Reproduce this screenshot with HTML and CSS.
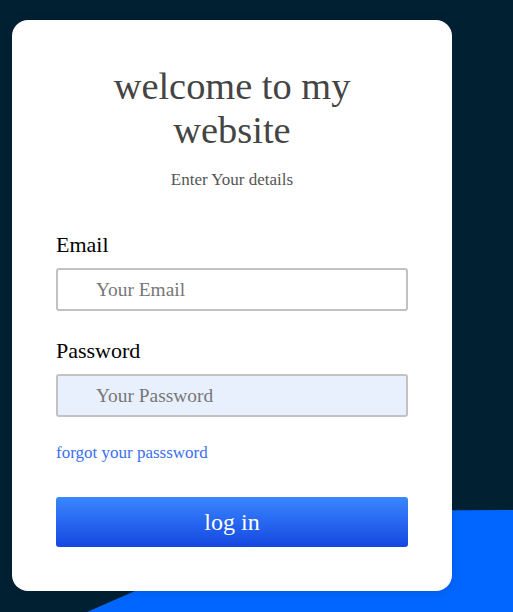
FILE: index.html
```html
<!DOCTYPE html>
<html>
<head>
<meta charset="utf-8">
<link rel="stylesheet" href="styles.css">
</head>
<body>
<div class="bg-shape"></div>
<main class="card">
  <h1 class="title">welcome to my website</h1>
  <p class="subtitle">Enter Your details</p>
  <form class="form">
    <label class="label" for="email">Email</label>
    <input class="input" id="email" type="text" placeholder="Your Email">
    <label class="label label-pw" for="pw">Password</label>
    <input class="input input-filled" id="pw" type="password" placeholder="Your Password">
    <a class="forgot" href="#">forgot your passsword</a>
    <button class="btn" type="button">log in</button>
  </form>
</main>
</body>
</html>
```

FILE: styles.css
```css
html, body {
  margin: 0;
  padding: 0;
}
body {
  width: 513px;
  height: 612px;
  background: #012133;
  position: relative;
  overflow: hidden;
  font-family: "Liberation Serif", "Times New Roman", serif;
}
.bg-shape {
  position: absolute;
  left: 0;
  top: 0;
  width: 513px;
  height: 612px;
  background: #0066ff;
  clip-path: polygon(87px 612px, 318px 511px, 513px 510px, 513px 612px);
}
.card {
  position: relative;
  margin: 20px 0 0 12px;
  width: 440px;
  height: 571px;
  box-sizing: border-box;
  padding: 44px;
  background: #ffffff;
  border-radius: 16px;
  box-shadow: 0 0 8px rgba(0, 0, 0, 0.15);
}
.title {
  margin: 0;
  font-weight: normal;
  font-size: 38.4px;
  color: #444444;
  text-align: center;
  line-height: 44px;
  padding: 0 40px;
}
.subtitle {
  margin: 18px 0 0;
  font-size: 17px;
  color: #555555;
  text-align: center;
}
.form {
  display: flex;
  flex-direction: column;
  margin-top: 42px;
}
.label {
  font-size: 22px;
  color: #000;
  margin-bottom: 10px;
}
.label-pw {
  margin-top: 27px;
}
.input {
  height: 43px;
  box-sizing: border-box;
  border: 2px solid #c2c2c2;
  border-radius: 3px;
  padding: 0 0 0 38px;
  font-family: "Liberation Serif", "Times New Roman", serif;
  font-size: 19.4px;
  color: #333;
  background: #ffffff;
  outline: none;
}
.input::placeholder {
  color: #777777;
}
.input-filled {
  background: #e8f0fe;
}
.forgot {
  margin-top: 26px;
  font-size: 17px;
  color: #3a6ff0;
  text-decoration: none;
  align-self: flex-start;
}
.btn {
  margin-top: 34px;
  height: 50px;
  border: none;
  border-radius: 3px;
  background: linear-gradient(to bottom, #3a87ff, #1447e0);
  color: #ffffff;
  font-family: "Liberation Serif", "Times New Roman", serif;
  font-size: 24px;
  padding: 0;
}
```
